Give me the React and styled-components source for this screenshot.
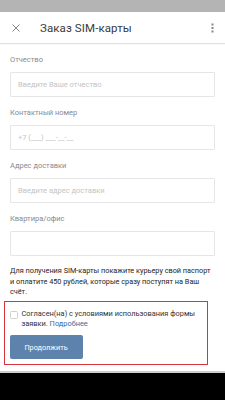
import React from 'react';
import styled, { createGlobalStyle } from 'styled-components';

const GlobalStyle = createGlobalStyle`
  * { box-sizing: border-box; }
  html, body { margin: 0; padding: 0; background: #fff; }
  body { font-family: Roboto, "Noto Sans", Arial, sans-serif; }
`;

const Screen = styled.div`
  width: 225px;
  height: 400px;
  display: flex;
  flex-direction: column;
  background: #fff;
  overflow: hidden;
`;

const StatusBar = styled.div`
  height: 12px;
  background: #b4b4b4;
  flex-shrink: 0;
`;

const Toolbar = styled.div`
  height: 31px;
  flex-shrink: 0;
  display: flex;
  align-items: center;
  padding: 0 8px 0 11px;
  background: #fff;
  box-shadow: 0 1px 1px rgba(0, 0, 0, 0.12);
  position: relative;
  z-index: 1;
`;

const IconButton = styled.div`
  width: 10px;
  height: 10px;
  display: flex;
  align-items: center;
  justify-content: center;
  color: #7a7a7a;
`;

const Title = styled.div`
  flex: 1;
  margin-left: 19px;
  font-size: 11.5px;
  color: #3a3a3a;
  letter-spacing: 0.1px;
`;

const Content = styled.div`
  flex: 1;
  padding: 12px 10px 0 10px;
`;

const Field = styled.div`
  margin-bottom: 11px;
`;

const Label = styled.div`
  font-size: 7.5px;
  line-height: 10px;
  color: #8a8a8a;
  margin-bottom: 7px;
`;

const Input = styled.div`
  height: 25px;
  border: 1px solid #e6e6e6;
  border-radius: 1px;
  display: flex;
  align-items: center;
  padding: 0 7px;
  font-size: 7.5px;
  color: #c4c4c4;
`;

const Note = styled.p`
  margin: -1px 0 0 0;
  font-size: 7.3px;
  line-height: 10.5px;
  color: #1e1e1e;
`;

const Agreement = styled.div`
  margin: 3px 7px 0 -6px;
  border: 1.5px solid #d7353f;
  padding: 7.5px 5px 5px 4.5px;
`;

const CheckRow = styled.div`
  display: flex;
  align-items: flex-start;
  gap: 4px;
`;

const Box = styled.div`
  width: 8px;
  height: 8px;
  margin-top: 1.5px;
  border: 1px solid #cfcfcf;
  border-radius: 1.5px;
  flex-shrink: 0;
`;

const CheckText = styled.div`
  font-size: 7.4px;
  line-height: 10px;
  color: #333;
`;

const Link = styled.span`
  display: inline-block;
  color: #3c6a9c;
`;

const Button = styled.div`
  margin-top: 6px;
  width: 73px;
  height: 24px;
  border-radius: 2px;
  background: #5d82ac;
  color: #fff;
  font-size: 7.3px;
  display: flex;
  align-items: center;
  justify-content: center;
`;

const NavDivider = styled.div`
  height: 2px;
  background: #cdcdcd;
  flex-shrink: 0;
`;

const NavBar = styled.div`
  height: 27px;
  background: #000;
  flex-shrink: 0;
`;

const fields = [
  { label: 'Отчество', placeholder: 'Введите Ваше отчество' },
  { label: 'Контактный номер', placeholder: '+7 (___) ___-__-__' },
  { label: 'Адрес доставки', placeholder: 'Введите адрес доставки' },
  { label: 'Квартира/офис', placeholder: '' },
];

export default function App() {
  return (
    <Screen>
      <GlobalStyle />
      <StatusBar />
      <Toolbar>
        <IconButton>
          <svg width="8" height="8" viewBox="0 0 8 8">
            <path d="M0.5 0.5 L7.5 7.5 M7.5 0.5 L0.5 7.5" stroke="currentColor" strokeWidth="0.9" fill="none" />
          </svg>
        </IconButton>
        <Title>Заказ SIM-карты</Title>
        <IconButton>
          <svg width="3" height="10" viewBox="0 0 3 10">
            <rect x="0.5" y="0.5" width="2" height="2" fill="#888" />
            <rect x="0.5" y="4" width="2" height="2" fill="#888" />
            <rect x="0.5" y="7.5" width="2" height="2" fill="#888" />
          </svg>
        </IconButton>
      </Toolbar>
      <Content>
        {fields.map((f) => (
          <Field key={f.label}>
            <Label>{f.label}</Label>
            <Input>{f.placeholder}</Input>
          </Field>
        ))}
        <Note>
          Для получения SIM-карты покажите курьеру свой паспорт и оплатите 450 рублей, которые сразу поступят на Ваш
          счёт.
        </Note>
        <Agreement>
          <CheckRow>
            <Box />
            <CheckText>
              Согласен(на) с условиями использования формы заявки. <Link>Подробнее</Link>
            </CheckText>
          </CheckRow>
          <Button>Продолжить</Button>
        </Agreement>
      </Content>
      <NavDivider />
      <NavBar />
    </Screen>
  );
}
